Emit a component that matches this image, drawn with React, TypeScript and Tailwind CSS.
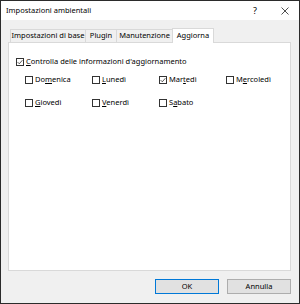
import { ReactNode } from 'react';

const font = { fontFamily: '"Noto Sans", "Open Sans", sans-serif' };

const Check = ({ checked }: { checked?: boolean }) => (
  <span className="w-[8px] h-[8px] border border-[#333] bg-white flex items-center justify-center shrink-0">
    {checked && (
      <svg width="6" height="6" viewBox="0 0 6 6" fill="none">
        <path d="M0.6 3.1 L2.3 4.8 L5.4 1.2" stroke="#333" strokeWidth="0.8" />
      </svg>
    )}
  </span>
);

const Label = ({ pre, key_, post }: { pre: string; key_: string; post: string }) => (
  <span>
    {pre}
    <span className="underline underline-offset-1">{key_}</span>
    {post}
  </span>
);

const Box = ({ checked, children }: { checked?: boolean; children: ReactNode }) => (
  <div className="flex items-center gap-[2px] h-[12px]">
    <Check checked={checked} />
    {children}
  </div>
);

const days = [
  { pre: 'Do', k: 'm', post: 'enica' },
  { pre: '', k: 'L', post: 'unedì' },
  { pre: 'Mar', k: 't', post: 'edì', checked: true },
  { pre: 'M', k: 'e', post: 'rcoledì' },
  { pre: '', k: 'G', post: 'iovedì' },
  { pre: '', k: 'V', post: 'enerdì' },
  { pre: 'S', k: 'a', post: 'bato' },
];

const App = () => {
  return (
    <div className="w-[300px] h-[304px] border border-[#2b2b2b] bg-[#f0f0f0] flex flex-col text-[7.5px] text-black" style={font}>
      {/* Title bar */}
      <div className="h-[19px] bg-white flex items-center pl-[5px] shrink-0">
        <span className="flex-1">Impostazioni ambientali</span>
        <span className="w-[10px] text-[9px] mr-[21px] text-center">?</span>
        <svg width="8" height="8" viewBox="0 0 8 8" className="mr-[10px]">
          <path d="M0.5 0.5 L7.5 7.5 M7.5 0.5 L0.5 7.5" stroke="#222" strokeWidth="0.8" />
        </svg>
      </div>

      {/* Body */}
      <div className="flex-1 flex flex-col pt-[8px] pl-[7px] pr-[8px] pb-[8px]">
        {/* Tabs */}
        <div className="flex items-end h-[14px] pl-[2px]">
          <div className="w-[76px] h-[13px] border border-[#d9d9d9] border-b-0 flex items-center justify-center">Impostazioni di base</div>
          <div className="w-[32px] h-[13px] -ml-px border border-[#d9d9d9] border-b-0 flex items-center justify-center">Plugin</div>
          <div className="w-[57px] h-[13px] -ml-px border border-[#d9d9d9] border-b-0 flex items-center justify-center">Manutenzione</div>
          <div className="w-[42px] h-[15px] -ml-px -mb-px relative z-10 bg-white border border-[#d9d9d9] border-b-0 flex items-center justify-center">Aggiorna</div>
        </div>

        {/* Panel */}
        <div className="h-[229px] bg-white border border-[#d9d9d9] pt-[13px] pl-[7px]">
          <Box checked>
            <Label pre="" key_="C" post="ontrolla delle informazioni d'aggiornamento" />
          </Box>
          <div className="grid grid-cols-[67px_67px_67px_67px] gap-y-[11px] mt-[6px] ml-[9px]">
            {days.map((d) => (
              <Box key={d.pre + d.k} checked={d.checked}>
                <Label pre={d.pre} key_={d.k} post={d.post} />
              </Box>
            ))}
          </div>
        </div>

        {/* Buttons */}
        <div className="flex justify-end gap-[8px] mt-[8px]">
          <button className="w-[64px] h-[15px] bg-[#e1e1e1] border border-[#0078d7] flex items-center justify-center">OK</button>
          <button className="w-[64px] h-[15px] bg-[#e1e1e1] border border-[#adadad] flex items-center justify-center">Annulla</button>
        </div>
      </div>
    </div>
  );
};

export default App;
